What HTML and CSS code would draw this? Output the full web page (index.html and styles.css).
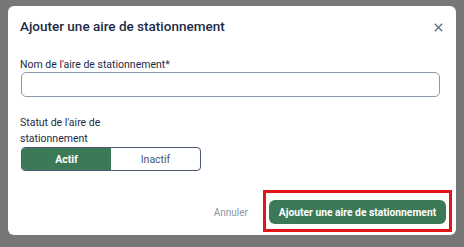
FILE: index.html
```html
<!DOCTYPE html>
<html lang="fr">
<head>
    <meta charset="UTF-8">
    <meta name="viewport" content="width=device-width, initial-scale=1.0">
    <title>Ajouter une aire de stationnement</title>
    <link rel="stylesheet" href="styles.css">
</head>
<body>
    <div class="modal">
        <div class="modal-header">
            <h2>Ajouter une aire de stationnement</h2>
            <button class="close" type="button" aria-label="Fermer">
                <svg width="9" height="9" viewBox="0 0 9 9">
                    <path d="M0.8 0.8 L8.2 8.2 M8.2 0.8 L0.8 8.2" stroke="#5b6b85" stroke-width="1.3" fill="none"/>
                </svg>
            </button>
        </div>

        <form class="modal-body">
            <div class="field">
                <label for="nom">Nom de l'aire de stationnement*</label>
                <input type="text" id="nom">
            </div>
            <div class="field status">
                <label>Statut de l'aire de<br>stationnement</label>
                <div class="toggle">
                    <span class="opt active">Actif</span>
                    <span class="opt">Inactif</span>
                </div>
            </div>
        </form>

        <div class="modal-footer">
            <button class="cancel" type="button">Annuler</button>
            <div class="highlight">
                <button class="submit" type="submit">Ajouter une aire de stationnement</button>
            </div>
        </div>
    </div>
</body>
</html>
```

FILE: styles.css
```css
body {
    font-family: Roboto, "Liberation Sans", sans-serif;
    margin: 0;
    padding: 6px 8px;
    background-color: #777777;
    height: 247px;
    box-sizing: border-box;
    overflow: hidden;
}

.modal {
    background-color: #fff;
    border-radius: 6px;
    width: 448px;
    height: 229px;
    box-sizing: border-box;
    display: flex;
    flex-direction: column;
    padding: 0 12px;
}

.modal-header {
    display: flex;
    align-items: center;
    justify-content: space-between;
    height: 38px;
    padding-top: 1px;
}

.modal-header h2 {
    margin: 0;
    font-size: 13.5px;
    font-weight: 500;
    color: #1d2a47;
}

.close {
    background: none;
    border: none;
    padding: 0;
    width: 12px;
    height: 12px;
    display: flex;
    align-items: center;
    justify-content: center;
    margin-top: 3px;
}

.modal-body {
    display: flex;
    flex-direction: column;
    padding-top: 13px;
}

.field {
    display: flex;
    flex-direction: column;
    color: #1d2a47;
    font-size: 10.5px;
}

.field label {
    line-height: 14px;
}

.field input {
    width: 419px;
    height: 25px;
    box-sizing: border-box;
    border: 1px solid #8b99ac;
    border-radius: 5px;
    margin: 0 0 0 1px;
}

.status {
    margin-top: 18px;
}

.status label {
    line-height: 16px;
}

.toggle {
    display: flex;
    width: 180px;
    height: 24px;
    margin-left: 1px;
    border: 1px solid #4b5973;
    border-radius: 4px;
    box-sizing: border-box;
    overflow: hidden;
}

.opt {
    flex: 1;
    display: flex;
    align-items: center;
    justify-content: center;
    font-size: 10.5px;
    color: #41557a;
}

.opt.active {
    background-color: #3c7a57;
    color: #fff;
    font-weight: 700;
}

.modal-footer {
    margin-top: auto;
    display: flex;
    justify-content: flex-end;
    align-items: center;
    padding-bottom: 3px;
}

.cancel {
    background: none;
    border: none;
    font-family: inherit;
    font-size: 10px;
    color: #8d95a1;
    padding: 0;
    margin: 2px 15px 0 0;
}

.highlight {
    display: flex;
    border: 3px solid #e01419;
    padding: 7px 3px 5px 3px;
    margin-right: -8px;
}

.submit {
    background-color: #3c7a57;
    color: #fff;
    border: none;
    border-radius: 6px;
    font-family: inherit;
    font-weight: 700;
    font-size: 10.3px;
    height: 24px;
    width: 177px;
    padding: 0;
}
```
